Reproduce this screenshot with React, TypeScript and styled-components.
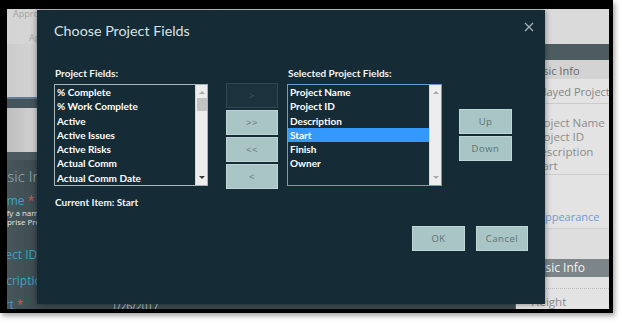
import styled, { createGlobalStyle, css } from 'styled-components';

const GlobalStyle = createGlobalStyle`
  html, body {
    margin: 0;
    padding: 0;
    background: #ffffff;
  }
  body {
    width: 622px;
    height: 323px;
    overflow: hidden;
    font-family: 'Lato', 'Open Sans', sans-serif;
  }
  * {
    box-sizing: border-box;
  }
`;

const ribbonTabs = ['Approve', 'Reject', 'Workflow', 'Submit ...', 'Make', 'Title Bar', 'Save'];
const availableFields = [
  '% Complete',
  '% Work Complete',
  'Active',
  'Active Issues',
  'Active Risks',
  'Actual Comm',
  'Actual Comm Date',
];
const selectedFields = ['Project Name', 'Project ID', 'Description', 'Start', 'Finish', 'Owner'];
const displayedFields = ['Project Name', 'Project ID', 'Description', 'Start'];

const Arrow = ({ dir, dark }: { dir: 'up' | 'down'; dark?: boolean }) => (
  <ArrowGlyph $dir={dir} $dark={dark} />
);

const App = () => {
  return (
    <>
      <GlobalStyle />
      <Frame>
        <Screen>
          <Ribbon>
            <TabRow>
              {ribbonTabs.map((t) => (
                <Tab key={t}>{t}</Tab>
              ))}
            </TabRow>
            <GroupRow>
              <GroupLabel>Approvals</GroupLabel>
            </GroupRow>
          </Ribbon>

          <Body>
            <MainPane>
              <CommandBar />
              <AccentRule />
              <SearchStrip />
              <PaneGap />
              <Form>
                <SectionTitle>Basic Info</SectionTitle>
                <FieldLabel $gap={9} $indent={-16}>
                  Name <Req>*</Req>
                </FieldLabel>
                <FieldHint>
                  Specify a name for the project.
                  <br />
                  Enterprise Project names must be unique.
                </FieldHint>
                <FieldLabel $gap={22} $indent={-24}>
                  Project ID
                </FieldLabel>
                <FieldLabel $gap={12} $indent={-22}>
                  Description
                </FieldLabel>
                <StartRow>
                  <FieldLabel $gap={0} $indent={-20}>
                    Start <Req>*</Req>
                  </FieldLabel>
                  <DateValue>1/26/2017</DateValue>
                </StartRow>
              </Form>
            </MainPane>

            <SidePane>
              <SideHeader />
              <SideSection>Basic Info</SideSection>
              <SidePanel>
                <SideCaption>Displayed Project Fields</SideCaption>
                <SideList>
                  {displayedFields.map((f) => (
                    <SideItem key={f}>{f}</SideItem>
                  ))}
                </SideList>
                <SideLink>Appearance</SideLink>
                <SideSpacer />
                <SideBand>Basic Info</SideBand>
                <SideField>Height</SideField>
              </SidePanel>
            </SidePane>
          </Body>

          <Dialog>
            <DialogHeader>
              <DialogTitle>Choose Project Fields</DialogTitle>
              <CloseButton aria-label="Close">
                <svg width="10" height="10" viewBox="0 0 10 10">
                  <path d="M1 1 L9 9 M9 1 L1 9" stroke="#a3b1b5" strokeWidth="1.3" />
                </svg>
              </CloseButton>
            </DialogHeader>

            <Transfer>
              <Column $width={154}>
                <ListLabel>Project Fields:</ListLabel>
                <ListBox $focused={false}>
                  <ListItems>
                    {availableFields.map((f) => (
                      <ListItem key={f}>{f}</ListItem>
                    ))}
                  </ListItems>
                  <ScrollBar>
                    <Arrow dir="up" />
                    <Thumb />
                    <ScrollFill />
                    <Arrow dir="down" dark />
                  </ScrollBar>
                </ListBox>
                <CurrentItem>Current Item: Start</CurrentItem>
              </Column>

              <ButtonStack $left={18} $top={17}>
                <ActionButton $width={52} disabled>
                  &gt;
                </ActionButton>
                <ActionButton $width={52}>&gt;&gt;</ActionButton>
                <ActionButton $width={52}>&lt;&lt;</ActionButton>
                <ActionButton $width={52}>&lt;</ActionButton>
              </ButtonStack>

              <Column $width={155} $left={9}>
                <ListLabel>Selected Project Fields:</ListLabel>
                <ListBox $focused>
                  <ListItems>
                    {selectedFields.map((f) => (
                      <ListItem key={f} $selected={f === 'Start'}>
                        {f}
                      </ListItem>
                    ))}
                  </ListItems>
                  <ScrollBar>
                    <Arrow dir="up" />
                    <ScrollFill />
                    <Arrow dir="down" />
                  </ScrollBar>
                </ListBox>
              </Column>

              <ButtonStack $left={17} $top={43}>
                <ActionButton $width={53}>Up</ActionButton>
                <ActionButton $width={53}>Down</ActionButton>
              </ButtonStack>
            </Transfer>

            <DialogFooter>
              <ActionButton $width={53}>OK</ActionButton>
              <ActionButton $width={52}>Cancel</ActionButton>
            </DialogFooter>
          </Dialog>
        </Screen>
      </Frame>
    </>
  );
};

export default App;

const Frame = styled.div`
  width: 613px;
  height: 313px;
  border-style: solid;
  border-color: #000;
  border-width: 9px 4px 4px 7px;
  box-shadow: 2px 3px 5px rgba(0, 0, 0, 0.35);
`;

const Screen = styled.div`
  position: relative;
  width: 602px;
  height: 300px;
  overflow: hidden;
  display: flex;
  flex-direction: column;
  background: #3c4b50;
  font-family: 'Open Sans', sans-serif;
`;

/* background page */

const Ribbon = styled.div`
  height: 35px;
  flex-shrink: 0;
  background: linear-gradient(90deg, #d4d4d4, #dcdcdc 50%, #dadada);
  display: flex;
  flex-direction: column;
  justify-content: space-between;
  overflow: hidden;
`;

const TabRow = styled.div`
  display: flex;
  gap: 16px;
  padding: 0 0 0 6px;
  font-size: 9px;
  line-height: 9px;
  color: #a4a4a4;
`;

const Tab = styled.span`
  white-space: nowrap;
`;

const GroupRow = styled.div`
  display: flex;
  padding: 0 0 1px 22px;
  font-size: 9px;
  line-height: 10px;
  color: #a8a8a8;
`;

const GroupLabel = styled.span``;

const Body = styled.div`
  flex: 1;
  display: flex;
  min-height: 0;
`;

const MainPane = styled.div`
  width: 508px;
  display: flex;
  flex-direction: column;
`;

const CommandBar = styled.div`
  height: 53px;
  background: linear-gradient(90deg, #cbcbcb, #d6d6d6 40px);
`;

const AccentRule = styled.div`
  height: 11px;
  border-top: 2px solid #5e7d96;
  background: #44545a;
`;

const SearchStrip = styled.div`
  height: 44px;
  background: linear-gradient(90deg, #bdbdbd, #d3d3d3 30px);
`;

const PaneGap = styled.div`
  height: 8px;
  background: #4b5a5f;
`;

const Form = styled.div`
  flex: 1;
  padding: 7px 0 0 0;
  background: linear-gradient(90deg, #47565b, #3a494e 40px);
  white-space: nowrap;
  overflow: hidden;
`;

const SectionTitle = styled.div`
  margin-left: -17px;
  font-size: 15px;
  line-height: 18px;
  font-weight: 300;
  color: #9fb0b8;
`;

const FieldLabel = styled.div<{ $gap: number; $indent: number }>`
  margin-top: ${(p) => p.$gap}px;
  margin-left: ${(p) => p.$indent}px;
  font-size: 12px;
  line-height: 14px;
  color: #3aa2c4;
`;

const Req = styled.span`
  color: #c65a50;
`;

const FieldHint = styled.div`
  margin-left: -20px;
  font-size: 8px;
  line-height: 9px;
  color: #e2e6e8;
`;

const StartRow = styled.div`
  display: flex;
  align-items: flex-start;
  margin-top: 10px;
`;

const DateValue = styled.div`
  margin-left: 88px;
  padding-top: 2px;
  font-size: 10px;
  line-height: 12px;
  color: #b8c2c6;
`;

const SidePane = styled.div`
  flex: 1;
  display: flex;
  flex-direction: column;
  border-left: 1px solid #3d6e98;
  background: #e3e3e3;
  overflow: hidden;
  white-space: nowrap;
`;

const SideHeader = styled.div`
  height: 16px;
  background: #4d5c61;
`;

const SideSection = styled.div`
  height: 20px;
  padding: 3px 0 0 14px;
  font-size: 11px;
  line-height: 15px;
  color: #6a6a6a;
  background: #d3d3d3;
`;

const SidePanel = styled.div`
  flex: 1;
  display: flex;
  flex-direction: column;
`;

const SideCaption = styled.div`
  height: 25px;
  padding: 5px 0 0 5px;
  font-size: 11px;
  line-height: 15px;
  color: #858585;
  border-bottom: 1px solid #cbcbcb;
`;

const SideList = styled.div`
  padding: 12px 0 0 16px;
  height: 71px;
  border-bottom: 1px solid #cdcdcd;
`;

const SideItem = styled.div`
  font-size: 11.5px;
  line-height: 14.3px;
  color: #8c8c8c;
`;

const SideLink = styled.div`
  height: 54px;
  padding: 35px 0 0 22px;
  font-size: 11px;
  line-height: 14px;
  color: #6d9bd6;
  border-bottom: 1px solid #d0d0d0;
`;

const SideSpacer = styled.div`
  height: 30px;
  background: #dedede;
`;

const SideBand = styled.div`
  height: 18px;
  padding: 1px 0 0 15px;
  font-size: 12px;
  line-height: 16px;
  color: #f1f1f1;
  background: #7c8589;
`;

const SideField = styled.div`
  margin-top: 11px;
  padding: 6px 0 0 15px;
  border-top: 1px dotted #bdbdbd;
  font-size: 11.5px;
  line-height: 14px;
  color: #8a8a8a;
`;

/* dialog */

const Dialog = styled.div`
  position: absolute;
  left: 30px;
  top: 1px;
  width: 508px;
  height: 294px;
  padding: 10px 17px 0 17px;
  background: #152c36;
  box-shadow: 0 0 6px rgba(0, 0, 0, 0.45);
  display: flex;
  flex-direction: column;
  font-family: 'Lato', 'Open Sans', sans-serif;
`;

const DialogHeader = styled.div`
  display: flex;
  justify-content: space-between;
  align-items: flex-start;
  height: 22px;
`;

const DialogTitle = styled.div`
  font-size: 14.3px;
  line-height: 22px;
  color: #d9e1e3;
`;

const CloseButton = styled.div`
  width: 12px;
  height: 12px;
  margin: 1px -7px 0 0;
  display: flex;
  align-items: center;
  justify-content: center;
`;

const Transfer = styled.div`
  display: flex;
  align-items: flex-start;
  margin-top: 24px;
`;

const Column = styled.div<{ $width: number; $left?: number }>`
  width: ${(p) => p.$width}px;
  margin-left: ${(p) => p.$left ?? 0}px;
  display: flex;
  flex-direction: column;
`;

const ListLabel = styled.div`
  height: 14px;
  margin-bottom: 4px;
  padding-left: 1px;
  font-size: 10px;
  line-height: 14px;
  font-weight: 700;
  color: #f2f5f6;
  white-space: nowrap;
`;

const ListBox = styled.div<{ $focused: boolean }>`
  height: 102px;
  display: flex;
  border: 1px solid ${(p) => (p.$focused ? '#6c9bd8' : '#a7b4b8')};
  background: #152c36;
`;

const ListItems = styled.div`
  flex: 1;
  overflow: hidden;
`;

const ListItem = styled.div<{ $selected?: boolean }>`
  height: 14.3px;
  padding-left: 2px;
  font-size: 10px;
  line-height: 14.3px;
  font-weight: 700;
  color: #ffffff;
  white-space: nowrap;
  ${(p) =>
    p.$selected &&
    css`
      background: #3399ff;
    `}
`;

const ScrollBar = styled.div`
  width: 12px;
  display: flex;
  flex-direction: column;
  align-items: center;
  padding: 6px 0 6px;
  background: #ededed;
  border-left: 1px solid #d6d6d6;
`;

const ArrowGlyph = styled.div<{ $dir: 'up' | 'down'; $dark?: boolean }>`
  width: 0;
  height: 0;
  border-left: 3.5px solid transparent;
  border-right: 3.5px solid transparent;
  ${(p) =>
    p.$dir === 'up'
      ? css`
          border-bottom: 3.5px solid ${p.$dark ? '#444' : '#a9a9a9'};
        `
      : css`
          border-top: 3.5px solid ${p.$dark ? '#3a3a3a' : '#a9a9a9'};
        `}
`;

const Thumb = styled.div`
  width: 10px;
  height: 13px;
  margin-top: 4px;
  background: #c3c3c3;
`;

const ScrollFill = styled.div`
  flex: 1;
`;

const CurrentItem = styled.div`
  margin-top: 9px;
  padding-left: 1px;
  font-size: 10px;
  line-height: 14px;
  font-weight: 700;
  color: #f2f5f6;
  white-space: nowrap;
`;

const ButtonStack = styled.div<{ $left: number; $top: number }>`
  margin-left: ${(p) => p.$left}px;
  margin-top: ${(p) => p.$top}px;
  display: flex;
  flex-direction: column;
  gap: 2px;
`;

const ActionButton = styled.button<{ $width: number }>`
  width: ${(p) => p.$width}px;
  height: 25px;
  padding: 0;
  border: 1px solid #c0d6d6;
  background: #a9c5c5;
  color: #5d7374;
  font-family: 'Open Sans', sans-serif;
  font-size: 9.5px;
  letter-spacing: 0.5px;
  cursor: pointer;

  &:disabled {
    border-color: #2f4953;
    background: #1b333d;
    color: #3f5b65;
    cursor: default;
  }
`;

const DialogFooter = styled.div`
  display: flex;
  justify-content: flex-end;
  gap: 11px;
  margin-top: 17px;
`;
